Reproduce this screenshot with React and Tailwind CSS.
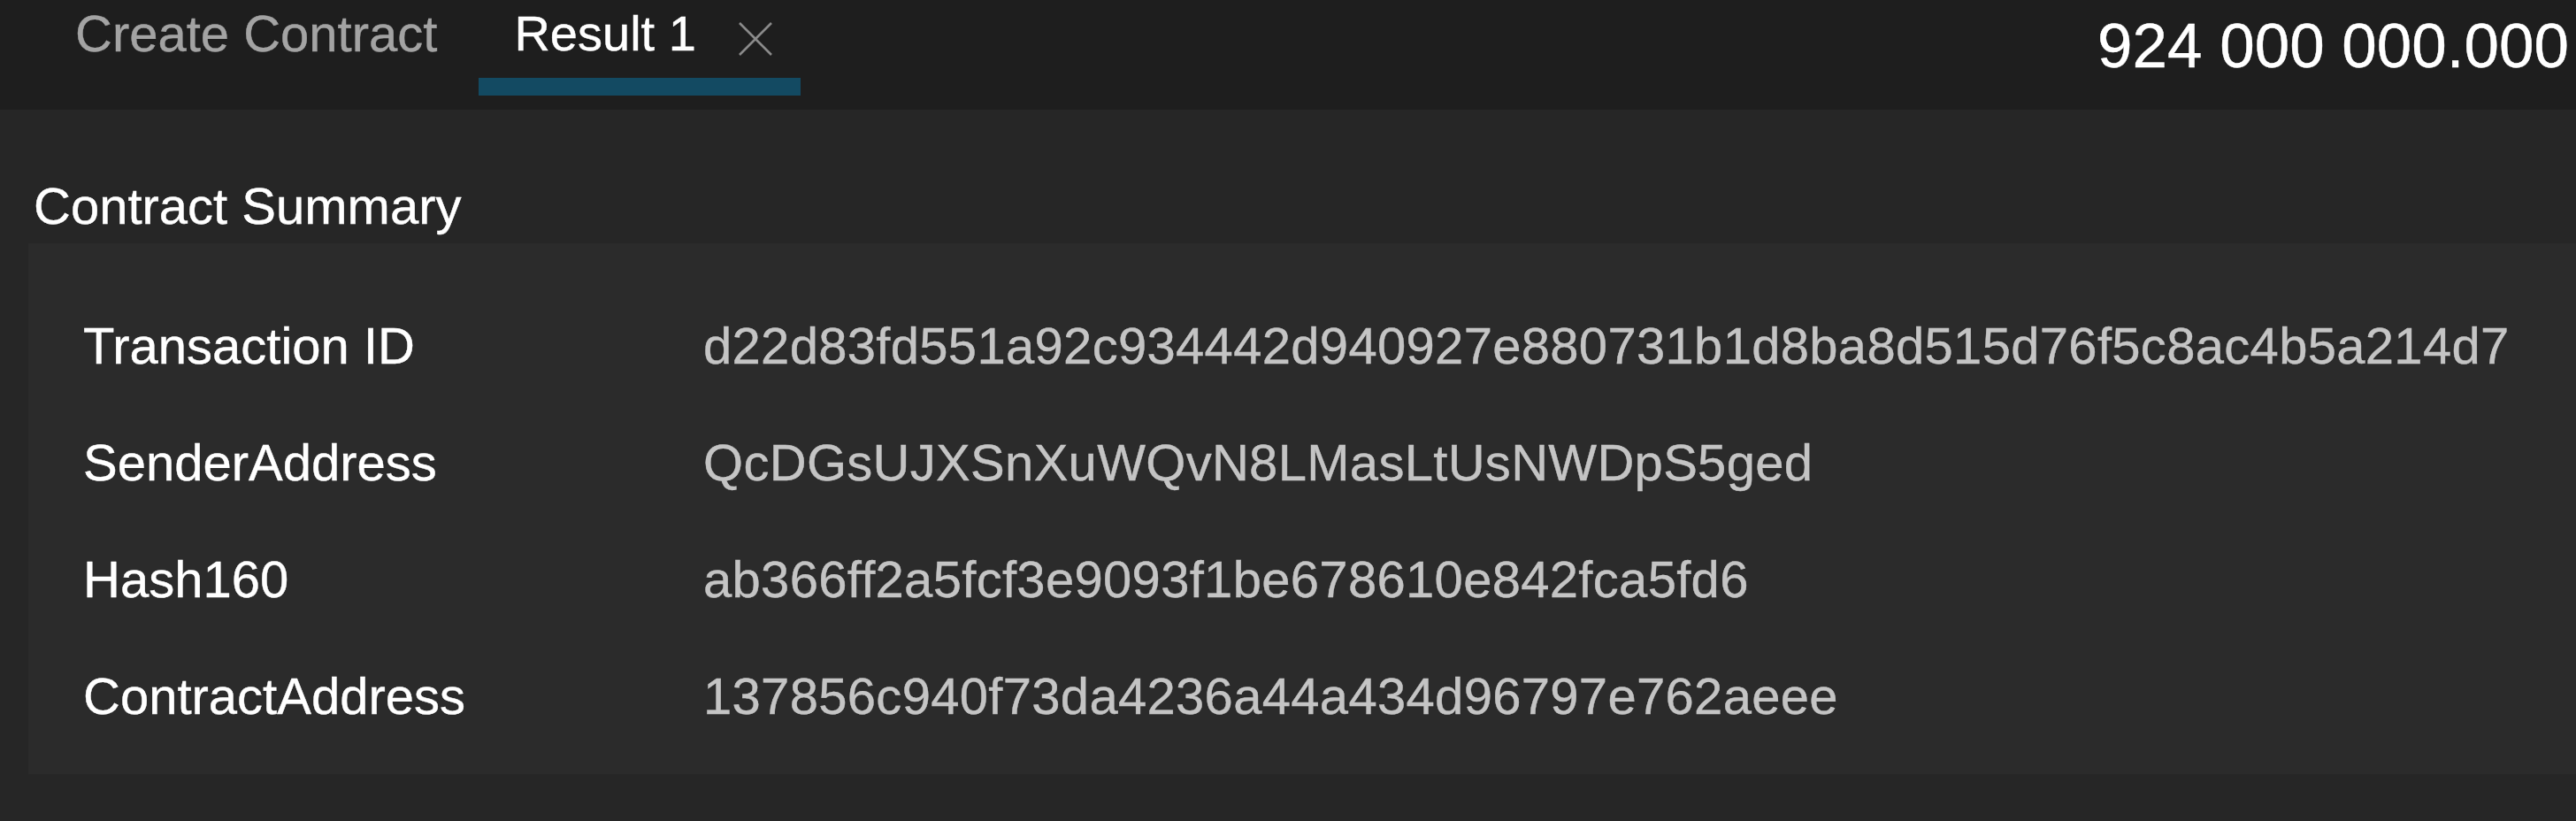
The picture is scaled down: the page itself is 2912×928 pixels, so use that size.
import React from "react";

const rows = [
  ["Transaction ID", "d22d83fd551a92c934442d940927e880731b1d8ba8d515d76f5c8ac4b5a214d7"],
  ["SenderAddress", "QcDGsUJXSnXuWQvN8LMasLtUsNWDpS5ged"],
  ["Hash160", "ab366ff2a5fcf3e9093f1be678610e842fca5fd6"],
  ["ContractAddress", "137856c940f73da4236a44a434d96797e762aeee"],
];

export default function App() {
  return (
    <div
      className="w-[2912px] h-[928px] overflow-hidden bg-[#262626] text-white flex flex-col [-webkit-text-stroke:0.4px_currentColor]"
      style={{ fontFamily: '"Liberation Sans", Arial, sans-serif' }}
    >
      <div className="h-[124px] shrink-0 bg-[#1e1e1e] flex items-start justify-between">
        <div className="flex items-start pl-[45px] gap-[7px]">
          <div className="flex flex-col">
            <div className="h-[88px] pt-[6px] px-[40px] flex items-start">
              <span className="text-[58px] leading-[64px] text-[#a3a3a3]">Create Contract</span>
            </div>
            <div className="h-[20px]" />
          </div>
          <div className="flex flex-col w-[364px]">
            <div className="h-[88px] pt-[6px] pl-[40px] flex items-start">
              <span className="text-[56px] leading-[64px] text-white">Result 1</span>
              <svg className="ml-[47px] mt-[19px]" width="40" height="38" viewBox="0 0 40 38">
                <path d="M2 1 L38 37 M38 1 L2 37" stroke="#8a8a8a" strokeWidth="2.6" fill="none" />
              </svg>
            </div>
            <div className="h-[20px] bg-[#134a62]" />
          </div>
        </div>
        <div className="pt-[12px] pr-[8px] text-[71px] leading-[80px] text-white whitespace-nowrap">
          924 000 000.000
        </div>
      </div>
      <div className="flex-1 flex flex-col">
        <div className="pt-[77px] pl-[38px] text-[58px] leading-[64px] text-white">Contract Summary</div>
        <div className="mt-[10px] ml-[32px] bg-[#2b2b2b] pt-[50px] pb-[22px] pl-[62px]">
          {rows.map(([k, v]) => (
            <div key={k} className="grid grid-cols-[701px_1fr] h-[132px] text-[58px] leading-[132px] whitespace-nowrap">
              <div className="text-white">{k}</div>
              <div className="text-[#c4c4c4] tracking-[0.3px]">{v}</div>
            </div>
          ))}
        </div>
      </div>
    </div>
  );
}
